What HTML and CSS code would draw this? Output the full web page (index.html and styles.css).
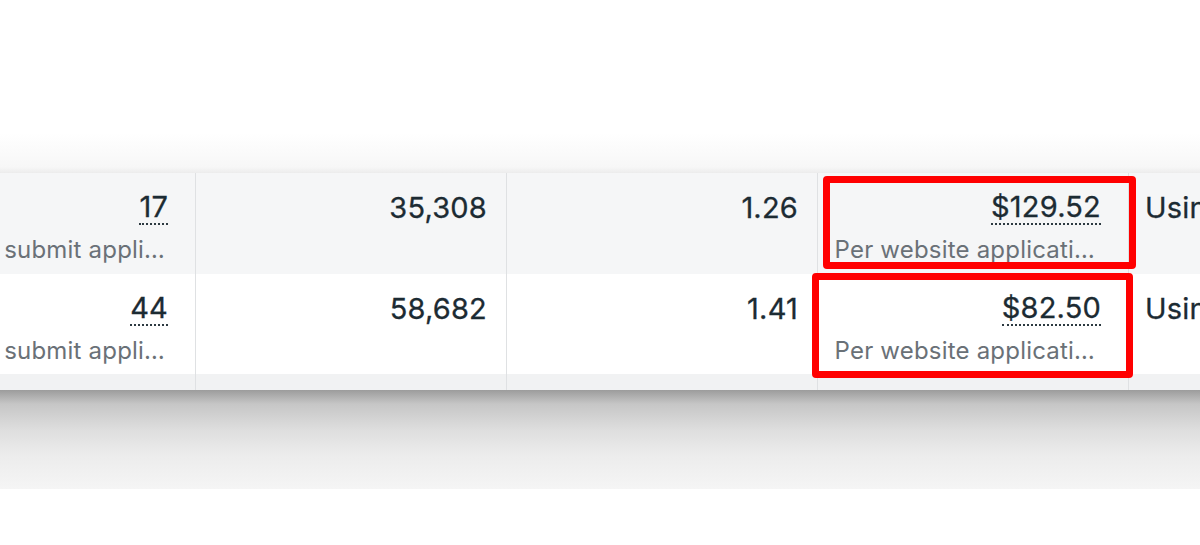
FILE: index.html
```html
<!DOCTYPE html>
<html lang="en">
<head>
<meta charset="utf-8">
<title>Results table</title>
<link rel="stylesheet" href="styles.css">
</head>
<body>
<div class="page">
  <div class="shade-top"></div>
  <div class="table-wrap">
    <div class="table">
      <div class="row row-alt">
        <div class="cell">
          <span class="num dotted">17</span>
          <span class="sub">submit appli…</span>
        </div>
        <div class="cell plain"><span class="num">35,308</span></div>
        <div class="cell plain"><span class="num">1.26</span></div>
        <div class="cell">
          <span class="num dotted">$129.52</span>
          <span class="sub sub-wide">Per website applicati…</span>
        </div>
        <div class="cell left"><span class="num">Using highest volume</span></div>
      </div>
      <div class="row">
        <div class="cell">
          <span class="num dotted">44</span>
          <span class="sub">submit appli…</span>
        </div>
        <div class="cell plain"><span class="num">58,682</span></div>
        <div class="cell plain"><span class="num">1.41</span></div>
        <div class="cell">
          <span class="num dotted">$82.50</span>
          <span class="sub sub-wide">Per website applicati…</span>
        </div>
        <div class="cell left"><span class="num">Using highest volume</span></div>
      </div>
      <div class="row row-strip">
        <div class="cell"></div>
        <div class="cell"></div>
        <div class="cell"></div>
        <div class="cell"></div>
        <div class="cell"></div>
      </div>
    </div>
    <div class="mark mark-1"></div>
    <div class="mark mark-2"></div>
  </div>
  <div class="shade-bottom"></div>
</div>
</body>
</html>
```

FILE: styles.css
```css
html, body {
  margin: 0;
  padding: 0;
  background: #ffffff;
}

body {
  font-family: Inter, "Noto Sans", "Liberation Sans", sans-serif;
  color: #1c2b33;
}

.page {
  width: 1200px;
  height: 545px;
  overflow: hidden;
  padding-top: 133px;
  box-sizing: border-box;
}

.shade-top {
  height: 40px;
  background: linear-gradient(#ffffff, #f7f7f7 85%, #ececec);
}

.table-wrap {
  position: relative;
  width: 1200px;
  overflow: hidden;
}

.table {
  display: flex;
  flex-direction: column;
}

.row {
  display: grid;
  grid-template-columns: 196px 311px 311px 311px 400px;
  height: 100px;
  background: #ffffff;
}

.row-alt {
  background: #f5f6f7;
  height: 101px;
}

.row-strip {
  height: 16px;
  background: #f1f2f3;
}

.cell {
  border-right: 1px solid #dfe1e3;
  display: flex;
  flex-direction: column;
  align-items: flex-end;
  padding: 17px 27px 0 0;
  box-sizing: border-box;
  min-width: 0;
}

.cell.plain {
  padding-right: 19px;
}

.cell.left {
  align-items: flex-start;
  padding: 17px 0 0 16px;
  border-right: none;
}

.num {
  font-size: 29px;
  line-height: 36px;
  font-weight: 400;
  letter-spacing: 0.2px;
  white-space: nowrap;
  color: #1c2b33;
  -webkit-text-stroke: 0.3px #1c2b33;
}

.dotted {
  line-height: 33px;
  border-bottom: 2px dotted #2d3a41;
}

.sub {
  margin-top: 10px;
  margin-right: 3px;
  font-size: 24px;
  line-height: 30px;
  color: #6a7177;
  white-space: nowrap;
  letter-spacing: 0.2px;
}

.sub-wide {
  margin-right: 6px;
}

.mark {
  position: absolute;
  border: 7px solid #ff0000;
  border-radius: 4px;
  box-sizing: border-box;
}

.mark-1 {
  left: 823px;
  top: 3px;
  width: 313px;
  height: 93px;
}

.mark-2 {
  left: 812px;
  top: 100px;
  width: 321px;
  height: 105px;
}

.shade-bottom {
  height: 99px;
  background: linear-gradient(#9c9c9c 0, #c6c6c6 14px, #dedede 40px, #ececec 65px, #f5f5f5 99px);
}
```
